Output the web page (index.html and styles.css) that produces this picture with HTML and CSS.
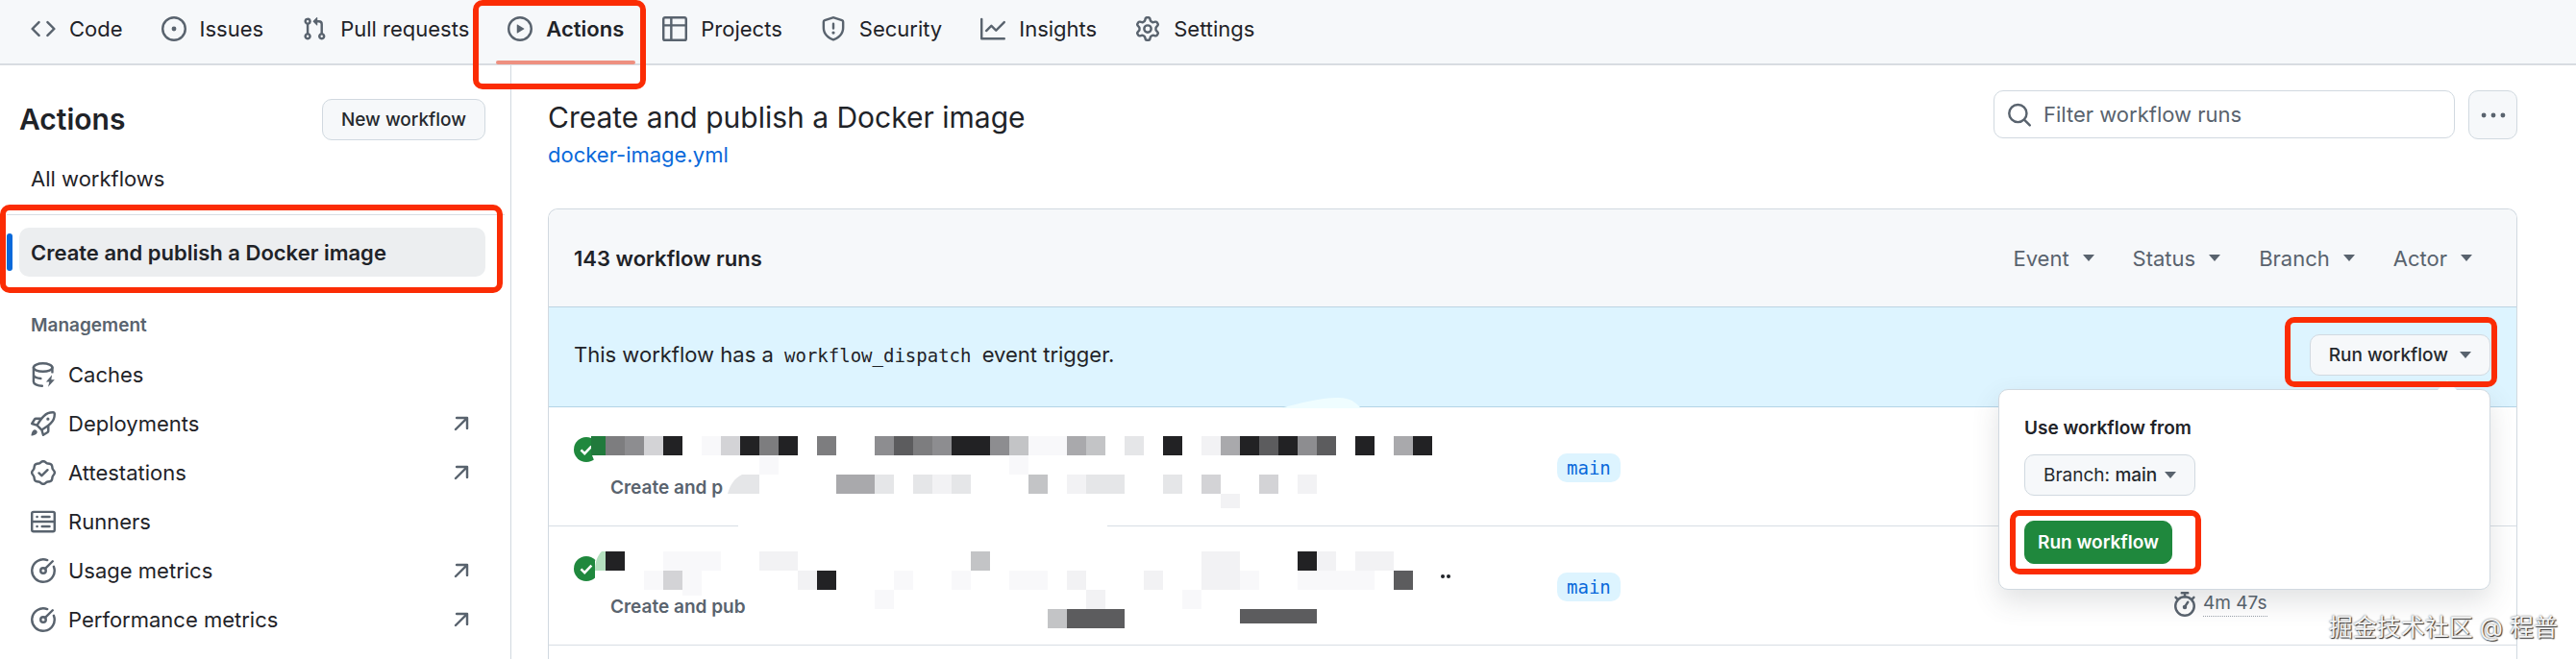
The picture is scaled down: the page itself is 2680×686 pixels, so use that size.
FILE: index.html
```html
<!DOCTYPE html>
<html lang="en">
<head>
    <meta charset="UTF-8">
    <meta name="viewport" content="width=device-width, initial-scale=1.0">
    <title>Actions - Create and publish a Docker image</title>
    <link rel="stylesheet" href="styles.css">
</head>
<body>
    <nav class="repo-nav">
        <a href="#" class="tab">
            <svg class="icon" viewBox="0 0 16 16"><path d="M4.72 3.22a.75.75 0 0 1 1.06 1.06L2.06 8l3.72 3.72a.75.75 0 1 1-1.06 1.06L.47 8.53a.75.75 0 0 1 0-1.06l4.25-4.25Zm6.56 0a.75.75 0 1 0-1.06 1.06L13.94 8l-3.72 3.72a.75.75 0 1 0 1.06 1.06l4.25-4.25a.75.75 0 0 0 0-1.06l-4.25-4.25Z"/></svg>
            Code
        </a>
        <a href="#" class="tab">
            <svg class="icon" viewBox="0 0 16 16"><path d="M8 9.5a1.5 1.5 0 1 0 0-3 1.5 1.5 0 0 0 0 3Z"/><path d="M8 0a8 8 0 1 1 0 16A8 8 0 0 1 8 0ZM1.5 8a6.5 6.5 0 1 0 13 0 6.5 6.5 0 0 0-13 0Z"/></svg>
            Issues
        </a>
        <a href="#" class="tab">
            <svg class="icon" viewBox="0 0 16 16"><path d="M1.5 3.25a2.25 2.25 0 1 1 3 2.122v5.256a2.251 2.251 0 1 1-1.5 0V5.372A2.25 2.25 0 0 1 1.5 3.25Zm5.677-.177L9.573.677A.25.25 0 0 1 10 .854V2.5h1A2.5 2.5 0 0 1 13.5 5v5.628a2.251 2.251 0 1 1-1.5 0V5a1 1 0 0 0-1-1h-1v1.646a.25.25 0 0 1-.427.177L7.177 3.427a.25.25 0 0 1 0-.354ZM3.75 2.5a.75.75 0 1 0 0 1.5.75.75 0 0 0 0-1.5Zm0 9.5a.75.75 0 1 0 0 1.5.75.75 0 0 0 0-1.5Zm8.25.75a.75.75 0 1 0 1.5 0 .75.75 0 0 0-1.5 0Z"/></svg>
            Pull requests
        </a>
        <a href="#" class="tab active">
            <svg class="icon" viewBox="0 0 16 16"><path d="M8 0a8 8 0 1 1 0 16A8 8 0 0 1 8 0ZM1.5 8a6.5 6.5 0 1 0 13 0 6.5 6.5 0 0 0-13 0Zm4.879-2.773 4.264 2.559a.25.25 0 0 1 0 .428l-4.264 2.559A.25.25 0 0 1 6 10.559V5.442a.25.25 0 0 1 .379-.215Z"/></svg>
            Actions
            <span class="mark mark-tab"></span>
        </a>
        <a href="#" class="tab">
            <svg class="icon" viewBox="0 0 16 16"><path d="M0 1.75C0 .784.784 0 1.75 0h12.5C15.216 0 16 .784 16 1.75v12.5A1.75 1.75 0 0 1 14.25 16H1.75A1.75 1.75 0 0 1 0 14.25ZM6.5 6.5v8h7.75a.25.25 0 0 0 .25-.25V6.5Zm8-1.5V1.75a.25.25 0 0 0-.25-.25H6.5V5Zm-13 1.5v7.75c0 .138.112.25.25.25H5v-8ZM5 5V1.5H1.75a.25.25 0 0 0-.25.25V5Z"/></svg>
            Projects
        </a>
        <a href="#" class="tab">
            <svg class="icon" viewBox="0 0 16 16"><path d="M7.467.133a1.748 1.748 0 0 1 1.066 0l5.25 1.68A1.75 1.75 0 0 1 15 3.48V7c0 1.566-.32 3.182-1.303 4.682-.983 1.498-2.585 2.813-5.032 3.855a1.697 1.697 0 0 1-1.33 0c-2.447-1.042-4.049-2.357-5.032-3.855C1.32 10.182 1 8.566 1 7V3.48a1.75 1.75 0 0 1 1.217-1.667Zm.61 1.429a.25.25 0 0 0-.153 0l-5.25 1.68a.25.25 0 0 0-.174.238V7c0 1.358.275 2.666 1.057 3.86.784 1.194 2.121 2.34 4.366 3.297a.196.196 0 0 0 .154 0c2.245-.956 3.582-2.104 4.366-3.298C13.225 9.666 13.5 8.36 13.5 7V3.48a.251.251 0 0 0-.174-.237l-5.25-1.68ZM8.75 4.75v3a.75.75 0 0 1-1.5 0v-3a.75.75 0 0 1 1.5 0ZM9 10.5a1 1 0 1 1-2 0 1 1 0 0 1 2 0Z"/></svg>
            Security
        </a>
        <a href="#" class="tab">
            <svg class="icon" viewBox="0 0 16 16"><path d="M1.5 1.75V13.5h13.75a.75.75 0 0 1 0 1.5H.75a.75.75 0 0 1-.75-.75V1.75a.75.75 0 0 1 1.5 0Zm14.28 2.53-5.25 5.25a.75.75 0 0 1-1.06 0L7 7.06 4.28 9.78a.751.751 0 0 1-1.042-.018.751.751 0 0 1-.018-1.042l3.25-3.25a.75.75 0 0 1 1.06 0L10 7.94l4.72-4.72a.751.751 0 0 1 1.042.018.751.751 0 0 1 .018 1.042Z"/></svg>
            Insights
        </a>
        <a href="#" class="tab">
            <svg class="icon" viewBox="0 0 16 16"><path d="M8 0a8.2 8.2 0 0 1 .701.031C9.444.095 9.99.645 10.16 1.29l.288 1.107c.018.066.079.158.212.224.231.114.454.243.668.386.123.082.233.09.299.071l1.103-.303c.644-.176 1.392.021 1.82.63.27.385.506.792.704 1.218.315.675.111 1.422-.364 1.891l-.814.806c-.049.048-.098.147-.088.294.016.257.016.515 0 .772-.01.147.038.246.088.294l.814.806c.475.469.679 1.216.364 1.891a7.977 7.977 0 0 1-.704 1.217c-.428.61-1.176.807-1.82.63l-1.102-.302c-.067-.019-.177-.011-.3.071a5.909 5.909 0 0 1-.668.386c-.133.066-.194.158-.211.224l-.29 1.106c-.168.646-.715 1.196-1.458 1.26a8.006 8.006 0 0 1-1.402 0c-.743-.064-1.289-.614-1.458-1.26l-.289-1.106c-.018-.066-.079-.158-.212-.224a5.738 5.738 0 0 1-.668-.386c-.123-.082-.233-.09-.299-.071l-1.103.303c-.644.176-1.392-.021-1.82-.63a8.12 8.12 0 0 1-.704-1.218c-.315-.675-.111-1.422.363-1.891l.815-.806c.05-.048.098-.147.088-.294a6.214 6.214 0 0 1 0-.772c.01-.147-.038-.246-.088-.294l-.815-.806C.635 6.045.431 5.298.746 4.623a7.92 7.92 0 0 1 .704-1.217c.428-.61 1.176-.807 1.82-.63l1.102.302c.067.019.177.011.3-.071.214-.143.437-.272.668-.386.133-.066.194-.158.211-.224l.29-1.106C6.009.645 6.556.095 7.299.03 7.53.01 7.764 0 8 0Zm-.571 1.525c-.036.003-.108.036-.137.146l-.289 1.105c-.147.561-.549.967-.998 1.189-.173.086-.34.183-.5.29-.417.278-.97.423-1.529.27l-1.103-.303c-.109-.03-.175.016-.195.045-.22.312-.412.644-.573.99-.014.031-.021.11.059.19l.815.806c.411.406.562.957.53 1.456a4.709 4.709 0 0 0 0 .582c.032.499-.119 1.05-.53 1.456l-.815.806c-.081.08-.073.159-.059.19.162.346.353.677.573.989.02.03.085.076.195.046l1.102-.303c.56-.153 1.113-.008 1.53.27.161.107.328.204.501.29.447.222.85.629.997 1.189l.289 1.105c.029.109.101.143.137.146a6.6 6.6 0 0 0 1.142 0c.036-.003.108-.036.137-.146l.289-1.105c.147-.561.549-.967.998-1.189.173-.086.34-.183.5-.29.417-.278.97-.423 1.529-.27l1.103.303c.109.029.175-.016.195-.045.22-.313.411-.644.573-.99.014-.031.021-.11-.059-.19l-.815-.806c-.411-.406-.562-.957-.53-1.456a4.709 4.709 0 0 0 0-.582c-.032-.499.119-1.05.53-1.456l.815-.806c.081-.08.073-.159.059-.19a6.464 6.464 0 0 0-.573-.989c-.02-.03-.085-.076-.195-.046l-1.102.303c-.56.153-1.113.008-1.53-.27a4.44 4.44 0 0 0-.501-.29c-.447-.222-.85-.629-.997-1.189l-.289-1.105c-.029-.11-.101-.143-.137-.146a6.6 6.6 0 0 0-1.142 0ZM11 8a3 3 0 1 1-6 0 3 3 0 0 1 6 0ZM9.5 8a1.5 1.5 0 1 0-3.001.001A1.5 1.5 0 0 0 9.5 8Z"/></svg>
            Settings
        </a>
    </nav>

    <div class="page">
        <aside class="sidebar">
            <div class="sidebar-head">
                <h1>Actions</h1>
                <button class="btn">New workflow</button>
            </div>
            <a href="#" class="side-link">All workflows</a>
            <hr class="divider">
            <a href="#" class="side-link selected">
                Create and publish a Docker image
                <span class="mark mark-workflow"></span>
            </a>
            <h2 class="side-title">Management</h2>
            <a href="#" class="side-link">
                <svg class="icon line" viewBox="0 0 16 16"><ellipse cx="7.8" cy="3.4" rx="6" ry="2.6"/><path d="M1.8 3.4v9.2c0 1.3 2.4 2.5 5.5 2.6M1.8 8c0 1.2 1.8 2.2 4.6 2.5M13.8 3.4v3"/><path class="solid" d="M13.6 8.2 9.8 12.6h2.1l-.8 3.2 4.2-4.6h-2.2Z"/></svg>
                <span>Caches</span>
            </a>
            <a href="#" class="side-link">
                <svg class="icon" viewBox="0 0 16 16"><path d="M14.064 0h.186C15.216 0 16 .784 16 1.75v.186a8.752 8.752 0 0 1-2.564 6.186l-.458.459c-.314.314-.641.616-.979.904v3.207c0 .608-.315 1.172-.833 1.49l-2.774 1.707a.749.749 0 0 1-1.11-.418l-.954-3.102a1.214 1.214 0 0 1-.145-.125L3.754 9.816a1.218 1.218 0 0 1-.124-.145L.528 8.717a.749.749 0 0 1-.418-1.11l1.71-2.774A1.748 1.748 0 0 1 3.31 4h3.204c.288-.338.59-.665.904-.979l.459-.458A8.749 8.749 0 0 1 14.064 0ZM8.938 3.623h-.002l-.458.458c-.76.76-1.437 1.598-2.02 2.5l-1.5 2.317 2.143 2.143 2.317-1.5c.902-.583 1.74-1.26 2.499-2.02l.459-.458a7.25 7.25 0 0 0 2.123-5.127V1.75a.25.25 0 0 0-.25-.25h-.186a7.249 7.249 0 0 0-5.125 2.123ZM3.56 14.56c-.732.732-2.334 1.045-3.005 1.148a.234.234 0 0 1-.201-.064.234.234 0 0 1-.064-.201c.103-.671.416-2.273 1.15-3.003a1.502 1.502 0 1 1 2.12 2.12Zm6.94-3.935c-.088.06-.177.118-.266.175l-2.35 1.521.548 1.783 1.949-1.2a.25.25 0 0 0 .119-.213ZM3.678 8.116 5.2 5.766c.058-.09.117-.178.176-.266H3.309a.25.25 0 0 0-.213.119l-1.2 1.95ZM12 5a1 1 0 1 1-2 0 1 1 0 0 1 2 0Z"/></svg>
                <span>Deployments</span>
                <svg class="icon line external" viewBox="0 0 16 16"><path d="M4.3 11.7 11.5 4.5M5 4.3h6.7V11"/></svg>
            </a>
            <a href="#" class="side-link">
                <svg class="icon" viewBox="0 0 16 16"><path d="m9.585.52.929.68c.153.112.331.186.518.215l1.138.175a2.678 2.678 0 0 1 2.24 2.24l.174 1.139c.029.187.103.365.215.518l.68.928a2.677 2.677 0 0 1 0 3.17l-.68.928a1.174 1.174 0 0 0-.215.518l-.175 1.138a2.678 2.678 0 0 1-2.241 2.241l-1.138.175a1.17 1.17 0 0 0-.518.215l-.928.68a2.677 2.677 0 0 1-3.17 0l-.928-.68a1.174 1.174 0 0 0-.518-.215L3.83 14.41a2.678 2.678 0 0 1-2.24-2.24l-.175-1.138a1.17 1.17 0 0 0-.215-.518l-.68-.928a2.677 2.677 0 0 1 0-3.17l.68-.928c.112-.153.186-.331.215-.518l.175-1.14a2.678 2.678 0 0 1 2.24-2.24l1.139-.175c.187-.029.365-.103.518-.215l.928-.68a2.677 2.677 0 0 1 3.17 0ZM7.303 1.728l-.927.68a2.67 2.67 0 0 1-1.18.489l-1.137.174a1.179 1.179 0 0 0-.987.987l-.174 1.136a2.677 2.677 0 0 1-.489 1.18l-.68.928a1.18 1.18 0 0 0 0 1.394l.68.927c.256.348.424.753.489 1.18l.174 1.137c.078.509.478.909.987.987l1.136.174a2.67 2.67 0 0 1 1.18.489l.928.68c.414.305.979.305 1.394 0l.927-.68a2.67 2.67 0 0 1 1.18-.489l1.137-.174a1.18 1.18 0 0 0 .987-.987l.174-1.136a2.67 2.67 0 0 1 .489-1.18l.68-.928a1.176 1.176 0 0 0 0-1.394l-.68-.927a2.686 2.686 0 0 1-.489-1.18l-.174-1.137a1.179 1.179 0 0 0-.987-.987l-1.136-.174a2.677 2.677 0 0 1-1.18-.489l-.928-.68a1.176 1.176 0 0 0-1.394 0ZM11.28 6.78l-3.75 3.75a.75.75 0 0 1-1.06 0L4.72 8.78a.751.751 0 0 1 .018-1.042.751.751 0 0 1 1.042-.018L7 8.94l3.22-3.22a.751.751 0 0 1 1.042.018.751.751 0 0 1 .018 1.042Z"/></svg>
                <span>Attestations</span>
                <svg class="icon line external" viewBox="0 0 16 16"><path d="M4.3 11.7 11.5 4.5M5 4.3h6.7V11"/></svg>
            </a>
            <a href="#" class="side-link">
                <svg class="icon line" viewBox="0 0 16 16"><rect x=".75" y="1.75" width="14.5" height="12.5" rx="1"/><path d="M.75 8h14.5M4 4.9h.1M7.2 4.9h4.8M4 11.1h.1M7.2 11.1h4.8"/></svg>
                <span>Runners</span>
            </a>
            <a href="#" class="side-link">
                <svg class="icon line" viewBox="0 0 16 16"><path d="M10.6 1.3A7.2 7.2 0 1 0 14.7 5.4M9.1 6.9 14 2"/><circle cx="8" cy="8" r="1.7"/></svg>
                <span>Usage metrics</span>
                <svg class="icon line external" viewBox="0 0 16 16"><path d="M4.3 11.7 11.5 4.5M5 4.3h6.7V11"/></svg>
            </a>
            <a href="#" class="side-link">
                <svg class="icon line" viewBox="0 0 16 16"><path d="M10.6 1.3A7.2 7.2 0 1 0 14.7 5.4M9.1 6.9 14 2"/><circle cx="8" cy="8" r="1.7"/></svg>
                <span>Performance metrics</span>
                <svg class="icon line external" viewBox="0 0 16 16"><path d="M4.3 11.7 11.5 4.5M5 4.3h6.7V11"/></svg>
            </a>
        </aside>

        <main class="content">
            <header class="content-head">
                <div>
                    <h2>Create and publish a Docker image</h2>
                    <a href="#" class="file-link">docker-image.yml</a>
                </div>
                <div class="search-row">
                    <label class="search">
                        <svg class="icon line" viewBox="0 0 16 16"><circle cx="7" cy="7.4" r="5.6"/><path d="m11.2 11.6 3.4 3.4"/></svg>
                        <input type="text" placeholder="Filter workflow runs" aria-label="Filter workflow runs">
                    </label>
                    <button class="btn kebab" aria-label="Show workflow options">
                        <svg class="icon" viewBox="0 0 16 16"><circle cx="1.9" cy="8" r="1.5"/><circle cx="8" cy="8" r="1.5"/><circle cx="14.1" cy="8" r="1.5"/></svg>
                    </button>
                </div>
            </header>

            <section class="box">
                <div class="box-head">
                    <strong>143 workflow runs</strong>
                    <div class="filters">
                        <button>Event <i class="caret"></i></button>
                        <button>Status <i class="caret"></i></button>
                        <button>Branch <i class="caret"></i></button>
                        <button>Actor <i class="caret"></i></button>
                    </div>
                </div>

                <div class="banner">
                    <p>This workflow has a <code>workflow_dispatch</code> event trigger.</p>
                    <div class="dispatch">
                        <button class="btn">Run workflow <i class="caret"></i></button>
                        <div class="popover">
                            <strong>Use workflow from</strong>
                            <button class="btn branch-btn"><span>Branch: <b>main</b></span> <i class="caret"></i></button>
                            <div class="submit">
                                <button class="btn btn-primary">Run workflow</button>
                                <span class="mark mark-submit"></span>
                            </div>
                        </div>
                        <span class="mark mark-dispatch"></span>
                    </div>
                </div>

                <div class="runs">
                    <div class="run">
                        <div class="run-title">
                            <svg class="icon success" viewBox="0 0 16 16"><circle cx="8" cy="8" r="8"/><path class="tick" d="m4.6 8.2 2.3 2.3 4.4-4.6"/></svg>
                            <span>Create and p</span>
                        </div>
                        <div><a href="#" class="branch">main</a></div>
                    </div>
                    <div class="run">
                        <div class="run-title">
                            <svg class="icon success" viewBox="0 0 16 16"><circle cx="8" cy="8" r="8"/><path class="tick" d="m4.6 8.2 2.3 2.3 4.4-4.6"/></svg>
                            <span>Create and pub</span>
                        </div>
                        <div><a href="#" class="branch">main</a></div>
                        <div class="duration">
                            <svg class="icon line" viewBox="0 0 16 16"><circle cx="8" cy="9.2" r="6"/><path d="M6 .8h4M8 .8v2.4M2.2 3.6l1.2 1.2M13.8 3.6l-1.2 1.2M8 9.6l2-3"/><circle class="solid" cx="8" cy="9.8" r="1.4"/></svg>
                            <span>4m 47s</span>
                        </div>
                    </div>

                    <!-- pixelated run names -->
                    <svg class="mosaic" viewBox="610 410 900 260" width="900" height="260">
                        <path fill="#effdff" d="M1332 425c20-5 40-11 60-11 14 0 18 5 24 11Z"/>
                        <path fill="#fff" d="M768 545h384v5H768ZM616 474h16v10h-12ZM619 584l5-10h8v30h-13Z"/>
                        <path fill="#217a3c" d="M615 454h15v20h-15Z"/>
                        <path fill="#b4e0bf" d="M619 594c0-10 3-16 7-20h4v20Z"/>
                        <g fill="#222224">
                            <path d="M690 454h20v20h-20ZM770 454h20v20h-20ZM810 454h20v20h-20ZM990 454h40v20h-40ZM1210 454h20v20h-20ZM1290 454h20v20h-20ZM1330 454h20v20h-20ZM1410 454h20v20h-20ZM1470 454h20v20h-20Z"/>
                            <path d="M630 574h20v20h-20ZM850 594h20v20h-20ZM1350 574h20v20h-20Z"/>
                        </g>
                        <g fill="#5c5c5e">
                            <path d="M930 454h20v20h-20ZM1310 454h20v20h-20ZM1370 454h20v20h-20Z"/>
                            <path d="M1450 594h20v20h-20ZM1110 634h60v20h-60ZM1290 634h80v15h-80Z"/>
                        </g>
                        <path fill="#7d7d7f" d="M630 454h20v20h-20ZM790 454h20v20h-20ZM850 454h20v20h-20ZM950 454h20v20h-20Z"/>
                        <path fill="#8d8d90" d="M650 454h20v20h-20ZM910 454h20v20h-20ZM970 454h20v20h-20ZM1030 454h20v20h-20ZM1350 454h20v20h-20Z"/>
                        <path fill="#a9a9ac" d="M1110 454h20v20h-20ZM1270 454h20v20h-20ZM1450 454h20v20h-20ZM870 494h40v20h-40Z"/>
                        <path fill="#c3c4c6" d="M1050 454h20v20h-20ZM1130 454h20v20h-20ZM1070 494h20v20h-20ZM1010 574h20v20h-20ZM1090 634h20v20h-20Z"/>
                        <path fill="#d3d3d6" d="M670 454h20v20h-20ZM750 454h20v20h-20ZM1250 494h20v20h-20ZM1310 494h20v20h-20ZM690 594h20v20h-20Z"/>
                        <path fill="#e5e6e8" d="M1170 454h20v20h-20ZM757 514c3-10 7-16 15-20h18v20ZM910 494h20v20h-20ZM950 494h20v20h-20ZM990 494h20v20h-20ZM1130 494h40v20h-40ZM1210 494h20v20h-20Z"/>
                        <path fill="#f2f2f4" d="M1250 454h20v20h-20ZM970 494h20v20h-20ZM1110 494h20v20h-20ZM1350 494h20v20h-20ZM1270 514h20v15h-20ZM790 574h40v20h-40ZM830 594h20v20h-20ZM1110 594h20v20h-20ZM1190 594h20v20h-20ZM1250 574h40v20h-40ZM1250 594h40v20h-40ZM1370 574h20v20h-20ZM1410 574h40v20h-40ZM1130 614h20v20h-20Z"/>
                        <path fill="#f8f8fa" d="M730 454h20v20h-20ZM1070 454h40v20h-40ZM790 474h20v20h-20ZM1050 474h20v20h-20ZM690 574h60v20h-60ZM670 594h20v20h-20ZM710 594h20v26h-20ZM930 594h20v20h-20ZM990 594h20v20h-20ZM1050 594h40v20h-40ZM910 614h20v20h-20ZM1290 594h20v20h-20ZM1350 594h80v20h-80ZM1230 614h20v20h-20Z"/>
                        <g fill="#1f2328"><circle cx="1501" cy="600" r="2"/><circle cx="1507" cy="600" r="2"/></g>
                    </svg>
                </div>
            </section>
        </main>
    </div>

    <div class="watermark">掘金技术社区 @ 程普</div>
</body>
</html>
```

FILE: styles.css
```css
* {
    box-sizing: border-box;
}
body {
    margin: 0;
    min-height: 100vh;
    overflow: hidden;
    position: relative;
    display: flex;
    flex-direction: column;
    font-family: Inter, "Noto Sans CJK SC", sans-serif;
    font-size: 22px;
    line-height: 32px;
    color: #1f2328;
    background: #fff;
}
a {
    color: inherit;
    text-decoration: none;
}
h1, h2, p {
    margin: 0;
}
button {
    font-family: inherit;
    cursor: pointer;
}
.icon {
    width: 26px;
    height: 26px;
    flex: none;
    fill: #59636e;
}
.line {
    fill: none;
    stroke: #59636e;
    stroke-width: 1.5;
    stroke-linecap: round;
    stroke-linejoin: round;
}
.solid {
    fill: #59636e;
    stroke: none;
}
.caret {
    border: 6px solid transparent;
    border-top: 7px solid #59636e;
    border-bottom: 0;
}

/* red frames */
.mark {
    position: absolute;
    z-index: 5;
    border: 6px solid #fb2c04;
    border-radius: 10px;
    pointer-events: none;
}
.mark-tab {
    inset: 0 -11px -27px -24px;
}
.mark-workflow {
    inset: -24px -18px -17px -20px;
}
.mark-dispatch {
    inset: -18px -7px -12px -26px;
}
.mark-submit {
    inset: -11px -30px -11px -15px;
}

/* top navigation */
.repo-nav {
    display: flex;
    gap: 16px;
    height: 68px;
    padding: 0 20px;
    background: #f6f8fa;
    border-bottom: 2px solid #d8dce1;
}
.tab {
    position: relative;
    display: flex;
    align-items: center;
    gap: 14px;
    padding: 0 12px 6px;
}
.active {
    font-weight: 600;
}
.active::after {
    content: "";
    position: absolute;
    inset: auto 0 -1px 0;
    height: 4px;
    border-radius: 2px;
    background: #ee9080;
}

.page {
    flex: 1;
    display: grid;
    grid-template-columns: 532px 1fr;
}

/* sidebar */
.sidebar {
    padding: 34px 26px 0 20px;
    border-right: 1px solid #d1d9e0;
}
.sidebar-head {
    display: flex;
    justify-content: space-between;
    align-items: center;
    margin-bottom: 14px;
}
.sidebar-head h1 {
    font-size: 30px;
    font-weight: 600;
    line-height: 44px;
}
.btn {
    display: flex;
    align-items: center;
    justify-content: center;
    gap: 12px;
    height: 43px;
    padding: 0 19px;
    font-size: 19px;
    font-weight: 500;
    color: #25292e;
    background: #f6f8fa;
    border: 1px solid #d1d9e0;
    border-radius: 10px;
}
.side-link {
    position: relative;
    display: flex;
    align-items: center;
    gap: 13px;
    height: 51px;
    padding: 0 12px;
}
.external {
    margin-left: auto;
}
.divider {
    margin: 12px -20px 13px -13px;
    border: 0;
    border-top: 1px solid #d8dee4;
}
.selected {
    font-weight: 600;
    background: #eceef0;
    border-radius: 10px;
}
.selected::before {
    content: "";
    position: absolute;
    left: -13px;
    top: 6px;
    bottom: 6px;
    width: 6px;
    border-radius: 3px;
    background: #0969da;
}
.side-title {
    padding: 36px 12px 10px;
    font-size: 19px;
    font-weight: 600;
    line-height: 30px;
    color: #59636e;
}

/* main column */
.content {
    display: flex;
    flex-direction: column;
    padding: 26px 61px 0 38px;
}
.content-head {
    display: flex;
    justify-content: space-between;
    align-items: flex-start;
    margin-bottom: 40px;
}
.content-head h2 {
    padding-top: 5px;
    font-size: 30px;
    font-weight: 400;
    line-height: 46px;
}
.file-link {
    color: #0969da;
}
.search-row {
    display: flex;
    gap: 14px;
}
.search {
    display: flex;
    align-items: center;
    gap: 12px;
    width: 480px;
    height: 50px;
    padding: 0 13px;
    border: 1px solid #d1d9e0;
    border-radius: 10px;
}
.search input {
    flex: 1;
    min-width: 0;
    padding: 0;
    border: 0;
    outline: none;
    font: inherit;
    background: none;
}
.search input::placeholder {
    color: #59636e;
    opacity: 1;
}
.kebab {
    width: 51px;
    height: 51px;
    padding: 0;
}

.box {
    flex: 1;
    border: 1px solid #d1d9e0;
    border-bottom: 0;
    border-radius: 10px 10px 0 0;
}
.box-head {
    display: flex;
    justify-content: space-between;
    align-items: center;
    height: 102px;
    padding: 0 46px 0 26px;
    background: #f6f8fa;
    border-bottom: 1px solid #bcd4e2;
    border-radius: 10px 10px 0 0;
}
.box-head strong {
    font-weight: 600;
}
.filters {
    display: flex;
    gap: 40px;
}
.filters button {
    display: flex;
    align-items: center;
    gap: 14px;
    padding: 0;
    border: 0;
    background: none;
    font-size: 22px;
    color: #59636e;
}
.banner {
    display: flex;
    justify-content: space-between;
    align-items: center;
    height: 104px;
    padding: 0 27px 4px 26px;
    background: #ddf4ff;
    border-bottom: 1px solid #b3d3e6;
}
.banner code {
    padding: 0 5px;
    font-family: "DejaVu Sans Mono", monospace;
    font-size: 19px;
}
.dispatch {
    position: relative;
}
.popover {
    position: absolute;
    z-index: 3;
    top: 57px;
    right: 0;
    width: 512px;
    padding: 24px 26px 26px;
    display: flex;
    flex-direction: column;
    align-items: flex-start;
    font-size: 19px;
    background: #fff;
    border: 1px solid #d1d9e0;
    border-radius: 10px;
    box-shadow: 0 12px 28px rgba(66, 74, 83, 0.16);
}
.popover::before {
    content: "";
    position: absolute;
    top: -10px;
    right: 34px;
    border: 10px solid transparent;
    border-top: 0;
    border-bottom-color: #fff;
}
.popover strong {
    font-weight: 600;
}
.branch-btn {
    gap: 8px;
    margin: 11px 0 26px;
    font-weight: 400;
}
.branch-btn b {
    font-weight: 500;
}
.submit {
    position: relative;
}
.btn-primary {
    height: 45px;
    padding: 0 13px;
    color: #fff;
    font-weight: 600;
    background: #1f883d;
    border-color: #1f883d;
}

/* runs */
.runs {
    position: relative;
}
.run {
    display: grid;
    grid-template-columns: 1023fr 640fr 331fr;
    align-items: center;
    height: 124px;
    padding: 0 27px 0 26px;
    border-bottom: 1px solid #d8dee4;
}
.run-title {
    display: grid;
    grid-template-columns: 26px 1fr;
    gap: 12px;
    align-self: start;
    padding-top: 31px;
    font-size: 19px;
    font-weight: 600;
    color: #59636e;
}
.run-title span {
    padding-top: 37px;
}
.success {
    fill: #1f883d;
}
.tick {
    fill: none;
    stroke: #fff;
    stroke-width: 1.6;
}
.branch {
    display: inline-block;
    padding: 0 10px;
    font-family: "DejaVu Sans Mono", monospace;
    font-size: 19px;
    line-height: 30px;
    color: #0969da;
    background: #ddf4ff;
    border-radius: 10px;
}
.duration {
    display: flex;
    align-items: center;
    align-self: end;
    gap: 6px;
    padding-bottom: 29px;
    font-size: 19px;
    line-height: 26px;
    color: #59636e;
}
.duration span {
    border-bottom: 1px dotted #9aa2ab;
}
.mosaic {
    position: absolute;
    left: 39px;
    top: -14px;
}
.watermark {
    position: absolute;
    right: 19px;
    bottom: 17px;
    z-index: 6;
    font-size: 25px;
    color: #f4f4f4;
    text-shadow: 1px 1px 1px #333, 0 0 2px #666;
}
```
